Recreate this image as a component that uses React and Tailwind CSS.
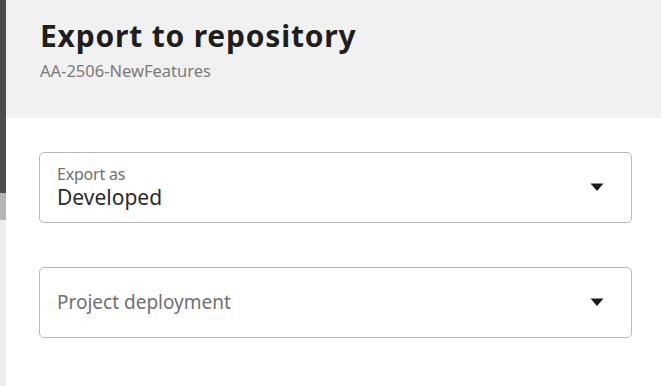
import { useState } from "react";

const Caret = () => (
  <svg width="14" height="9" viewBox="0 0 14 9" className="shrink-0">
    <path d="M0.5 0.5 L13.5 0.5 L7 8 Z" fill="#1c1c1c" />
  </svg>
);

const SelectField = ({ label, value }) => (
  <div className="flex items-center h-[71px] rounded-[5px] border border-[#b9b9b9] bg-white pl-[17px] pr-[27px]">
    <div className="flex-1 flex flex-col justify-center">
      {value ? (
        <>
          <span className="text-[16px] leading-[18px] text-[#707070] tracking-[-0.2px]">{label}</span>
          <span className="text-[21px] leading-[26px] text-[#2a2a2a] mt-[1px]">{value}</span>
        </>
      ) : (
        <span className="text-[19px] leading-[24px] text-[#707070] mb-[2px]">{label}</span>
      )}
    </div>
    <Caret />
  </div>
);

export default function App() {
  const [exportAs] = useState("Developed");

  return (
    <div
      className="flex w-[661px] h-[386px] bg-[#fbfbfb] overflow-hidden"
      style={{ fontFamily: '"Noto Sans", "Open Sans", sans-serif' }}
    >
      {/* dark edge of the window behind */}
      <div className="w-[6px] flex flex-col shrink-0">
        <div className="h-[193px] bg-[#4b4c51]" />
        <div className="h-[27px] bg-[#b4b4b6]" />
        <div className="flex-1 bg-[#eeeeee]" />
      </div>

      <div className="flex-1 flex flex-col bg-white">
        <div className="h-[118px] bg-[#f1f1f1] pl-[34px] pt-[17px]">
          <h1 className="text-[30px] leading-[38px] font-bold text-[#1e1e1e] tracking-[0.8px]">
            Export to repository
          </h1>
          <p className="text-[16.5px] leading-[22px] text-[#7a7a7a] mt-[5px]">AA-2506-NewFeatures</p>
        </div>

        <div className="flex flex-col gap-[44px] pl-[33px] pr-[29px] pt-[34px]">
          <SelectField label="Export as" value={exportAs} />
          <SelectField label="Project deployment" />
        </div>
      </div>
    </div>
  );
}
